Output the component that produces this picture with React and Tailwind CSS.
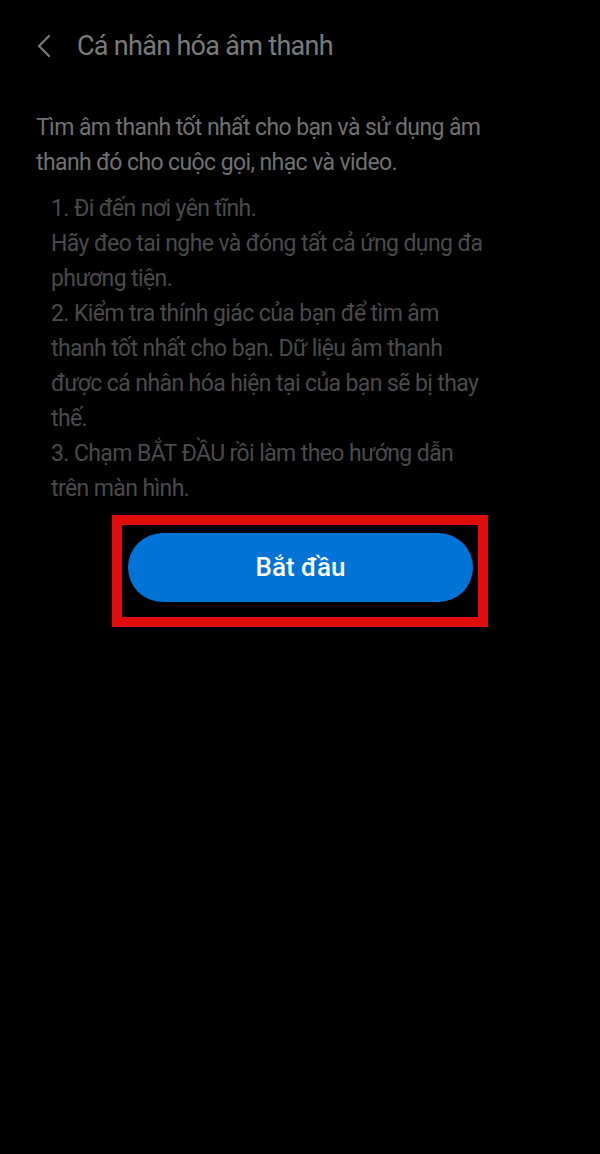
export default function App() {
  const font = { fontFamily: "Roboto, 'Noto Sans', sans-serif" };
  return (
    <div className="w-[600px] h-[1154px] bg-black" style={font}>
      {/* Header */}
      <div className="flex items-center h-[92px] pl-[36px]">
        <svg width="16" height="24" viewBox="0 0 16 24" className="shrink-0">
          <polyline
            points="13,2 3,12 13,22"
            fill="none"
            stroke="#7a7a7a"
            strokeWidth="2.2"
            strokeLinecap="round"
            strokeLinejoin="round"
          />
        </svg>
        <h1 className="ml-[25px] text-[27px] tracking-[-0.7px] text-[#7a7a7a] font-normal leading-none">
          Cá nhân hóa âm thanh
        </h1>
      </div>

      {/* Content */}
      <div className="pl-[36px] pr-[110px] pt-[18px] text-[23px] leading-[35px] tracking-[-0.6px]">
        <p className="text-[#707070]">
          Tìm âm thanh tốt nhất cho bạn và sử dụng âm thanh đó cho cuộc gọi, nhạc và video.
        </p>
        <div className="pl-[15px] mt-[11px] text-[#4a4a4a]">
          <p>1. Đi đến nơi yên tĩnh.</p>
          <p>Hãy đeo tai nghe và đóng tất cả ứng dụng đa phương tiện.</p>
          <p>2. Kiểm tra thính giác của bạn để tìm âm thanh tốt nhất cho bạn. Dữ liệu âm thanh được cá nhân hóa hiện tại của bạn sẽ bị thay thế.</p>
          <p>3. Chạm BẮT ĐẦU rồi làm theo hướng dẫn trên màn hình.</p>
        </div>
      </div>

      {/* Start button */}
      <div className="flex justify-center mt-[9px]">
        <div className="w-[376px] h-[112px] border-[10px] border-[#e10c0c] pt-[8px] pl-[6px]">
          <button className="w-[345px] h-[69px] rounded-full bg-[#0073d7] text-white text-[26px] font-medium">
            Bắt đầu
          </button>
        </div>
      </div>
    </div>
  );
}
